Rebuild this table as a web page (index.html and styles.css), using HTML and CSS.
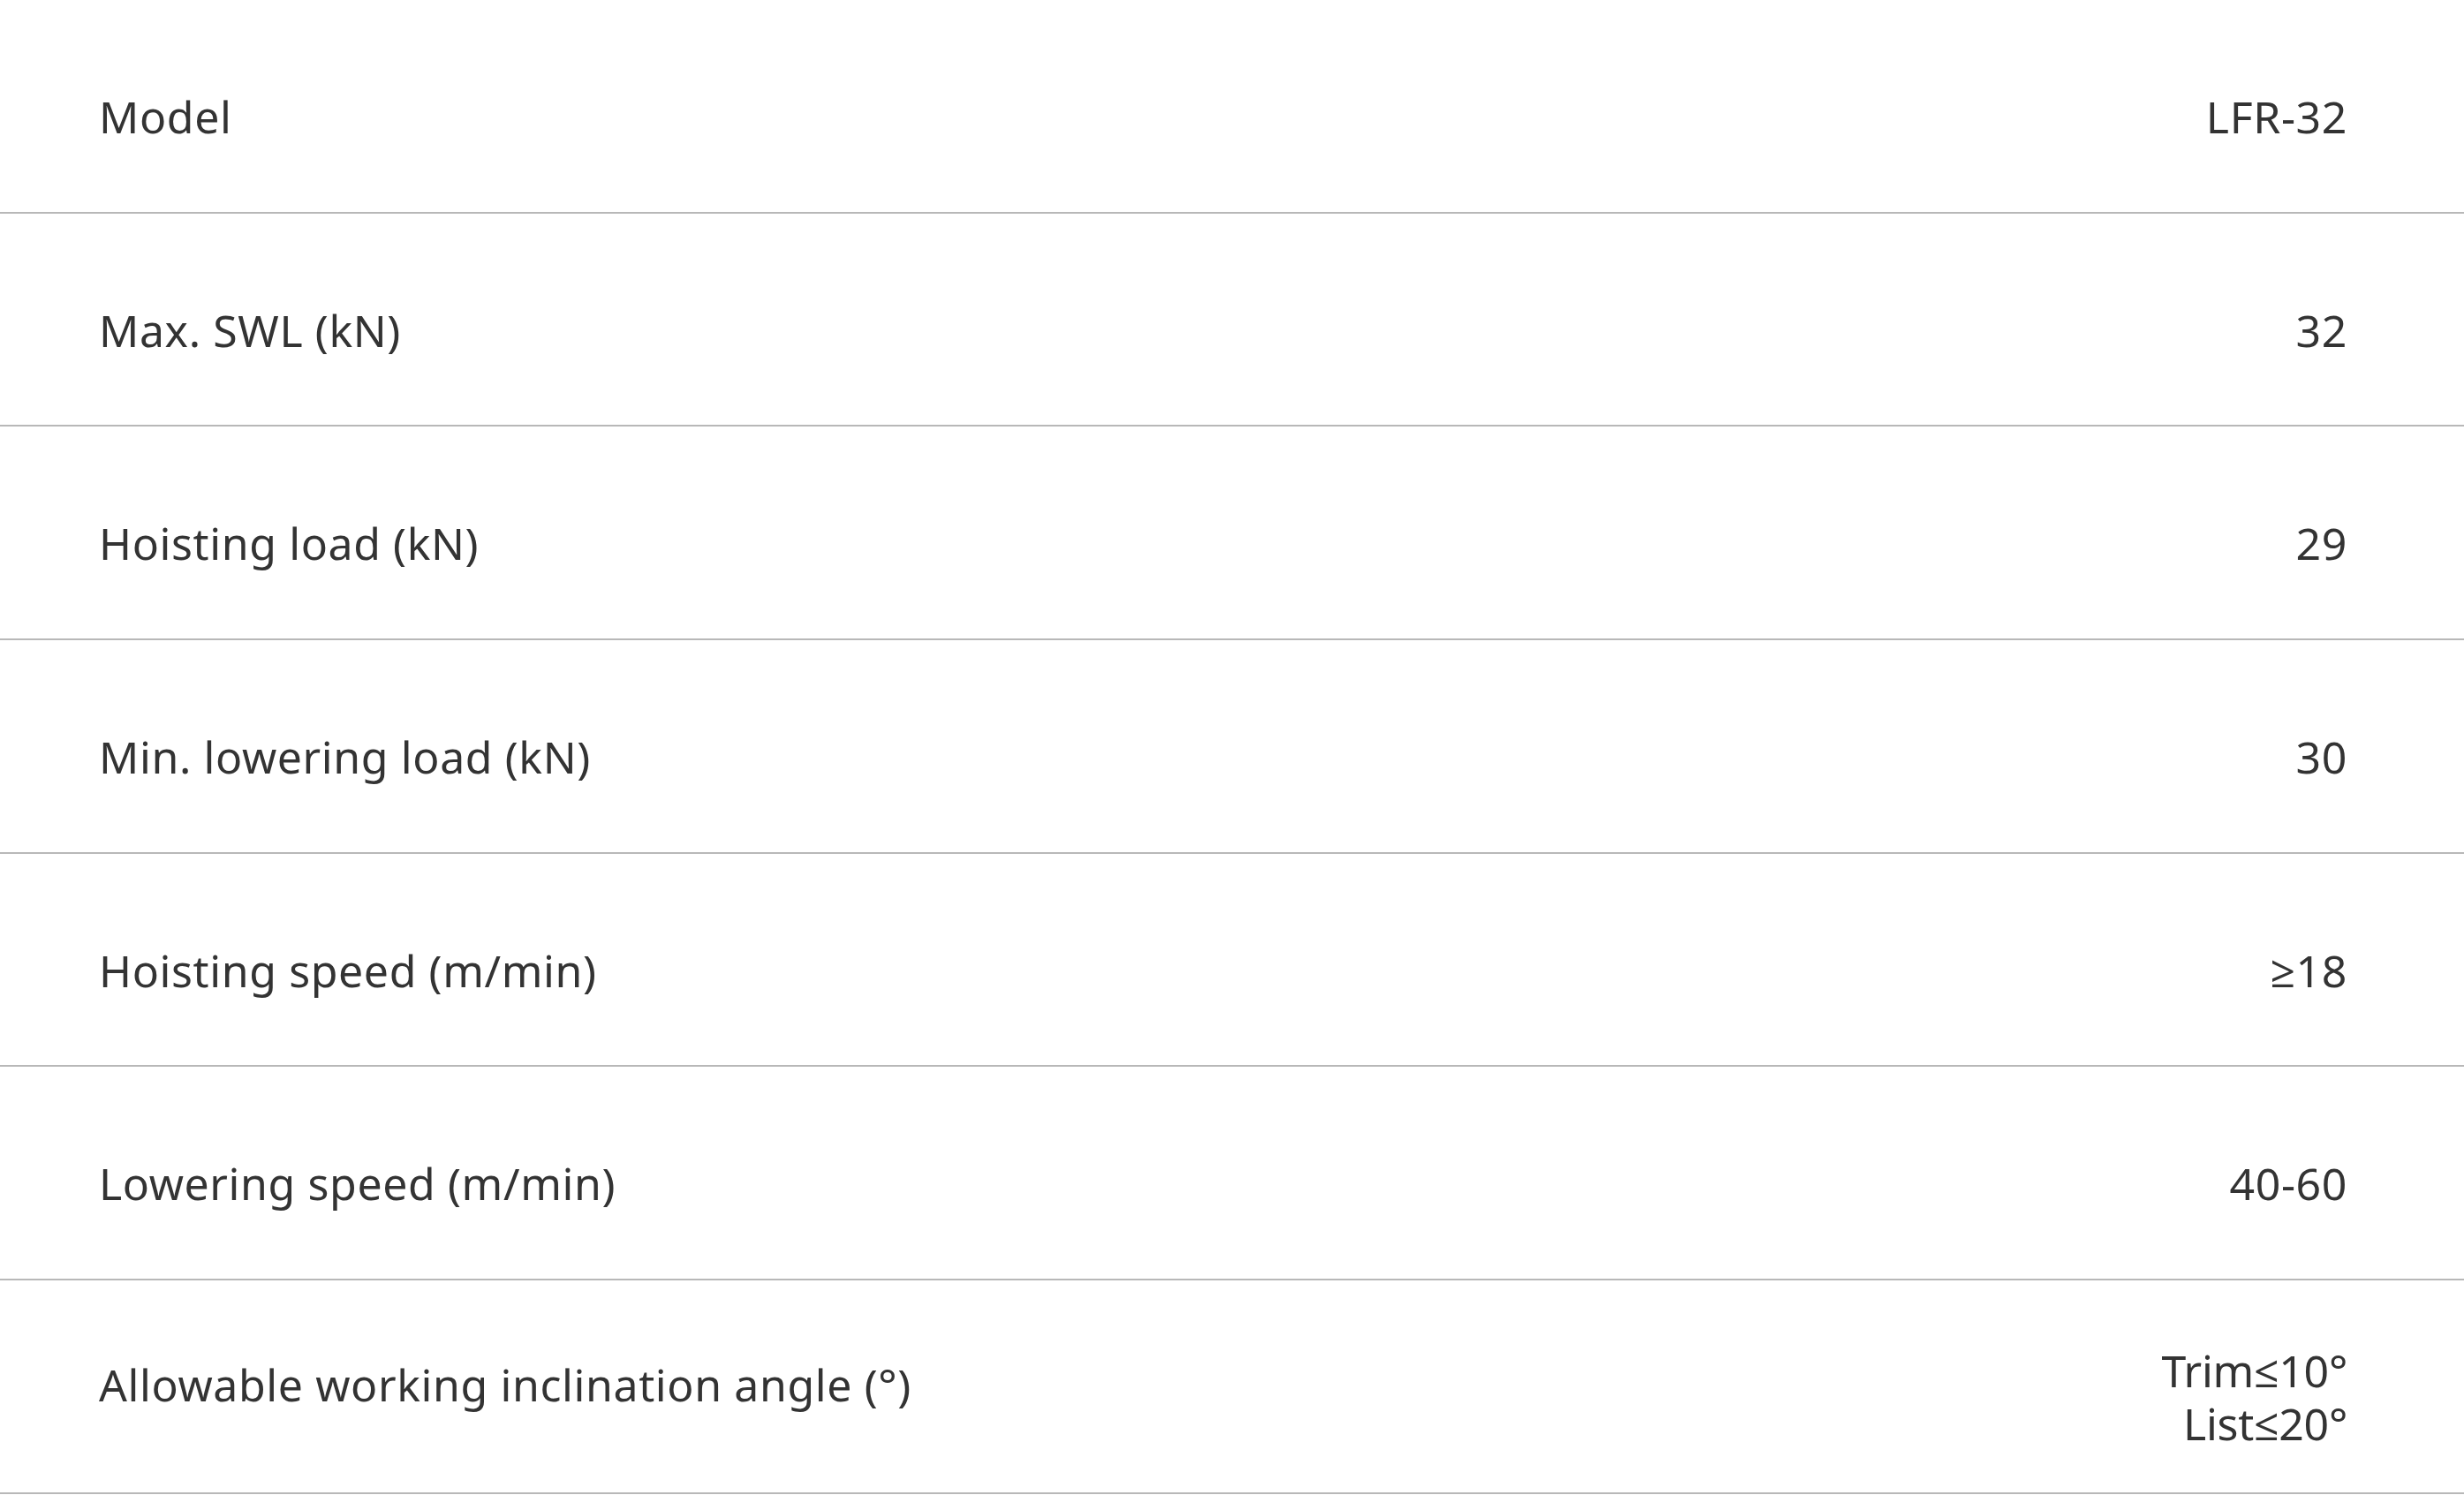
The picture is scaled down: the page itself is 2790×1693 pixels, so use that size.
FILE: index.html
```html
<!DOCTYPE html>
<html lang="en">
<head>
<meta charset="utf-8">
<title>Specifications</title>
<link rel="stylesheet" href="styles.css">
</head>
<body>
<div class="spec">
  <div class="row"><div class="label">Model</div><div class="value">LFR-32</div></div>
  <div class="row"><div class="label">Max. SWL (kN)</div><div class="value">32</div></div>
  <div class="row"><div class="label">Hoisting load (kN)</div><div class="value">29</div></div>
  <div class="row"><div class="label">Min. lowering load (kN)</div><div class="value">30</div></div>
  <div class="row"><div class="label">Hoisting speed (m/min)</div><div class="value">≥18</div></div>
  <div class="row"><div class="label">Lowering speed (m/min)</div><div class="value">40-60</div></div>
  <div class="row row-multi"><div class="label">Allowable working inclination angle (°)</div><div class="value">Trim≤10°<br>List≤20°</div></div>
</div>
</body>
</html>
```
FILE: styles.css
```css
html, body {
  margin: 0;
  padding: 0;
  background: #ffffff;
}
body {
  font-family: "Noto Sans", "Open Sans", sans-serif;
  color: #333333;
  font-size: 50px;
  letter-spacing: 0.6px;
}
.spec {
  display: flex;
  flex-direction: column;
}
.row {
  box-sizing: border-box;
  height: 241.7px;
  border-bottom: 2px solid #b8b8b8;
  display: flex;
  align-items: center;
  justify-content: space-between;
  padding: 24px 132px 0 112px;
}
.label {
  line-height: 1.2;
}
.value {
  text-align: right;
  line-height: 1.2;
}
.row-multi .label {
  margin-bottom: 28px;
}
.row-multi .value {
  letter-spacing: -0.3px;
}
```
